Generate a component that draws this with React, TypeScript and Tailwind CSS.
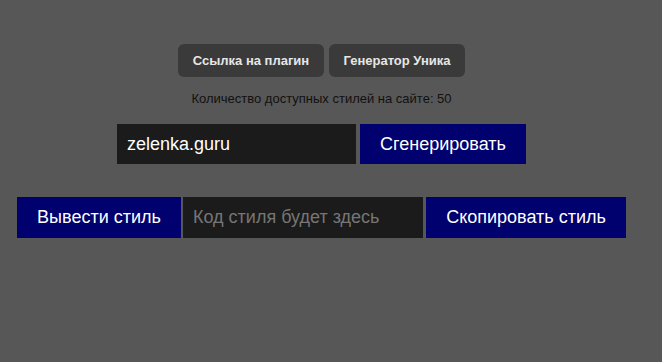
export default function App() {
  return (
    <div className="min-h-[362px] w-full bg-[#575757] font-['Liberation_Sans',Arial,sans-serif]">
      <div className="flex w-[643px] flex-col items-center pt-[44px]">
        {/* Верхние кнопки */}
        <div className="flex gap-[5px]">
          <button className="h-[33px] w-[146px] rounded-[6px] bg-[#3a3a3a] text-[13px] font-bold text-[#e6e6e6]">
            Ссылка на плагин
          </button>
          <button className="h-[33px] w-[136px] rounded-[6px] bg-[#3a3a3a] text-[13px] font-bold text-[#e6e6e6]">
            Генератор Уника
          </button>
        </div>
        <p className="mt-[14px] text-[13px] leading-[15px] text-[#111]">
          Количество доступных стилей на сайте: 50
        </p>

        {/* Генерация */}
        <div className="mt-[18px] flex gap-[4px]">
          <input
            defaultValue="zelenka.guru"
            className="h-[40px] w-[239px] bg-[#1b1b1b] px-[10px] text-[18px] text-white outline-none"
          />
          <button className="h-[40px] w-[166px] bg-[#00006e] text-[18px] text-white">
            Сгенерировать
          </button>
        </div>

        {/* Вывод стиля */}
        <div className="mt-[33px] flex">
          <button className="h-[41px] w-[164px] bg-[#00006e] text-[18px] text-white">
            Вывести стиль
          </button>
          <input
            placeholder="Код стиля будет здесь"
            className="ml-[2px] h-[41px] w-[240px] bg-[#1b1b1b] px-[10px] text-[18px] text-white outline-none placeholder:text-[#767676]"
          />
          <button className="ml-[3px] h-[41px] w-[200px] bg-[#00006e] text-[18px] text-white">
            Скопировать стиль
          </button>
        </div>
      </div>
    </div>
  )
}
